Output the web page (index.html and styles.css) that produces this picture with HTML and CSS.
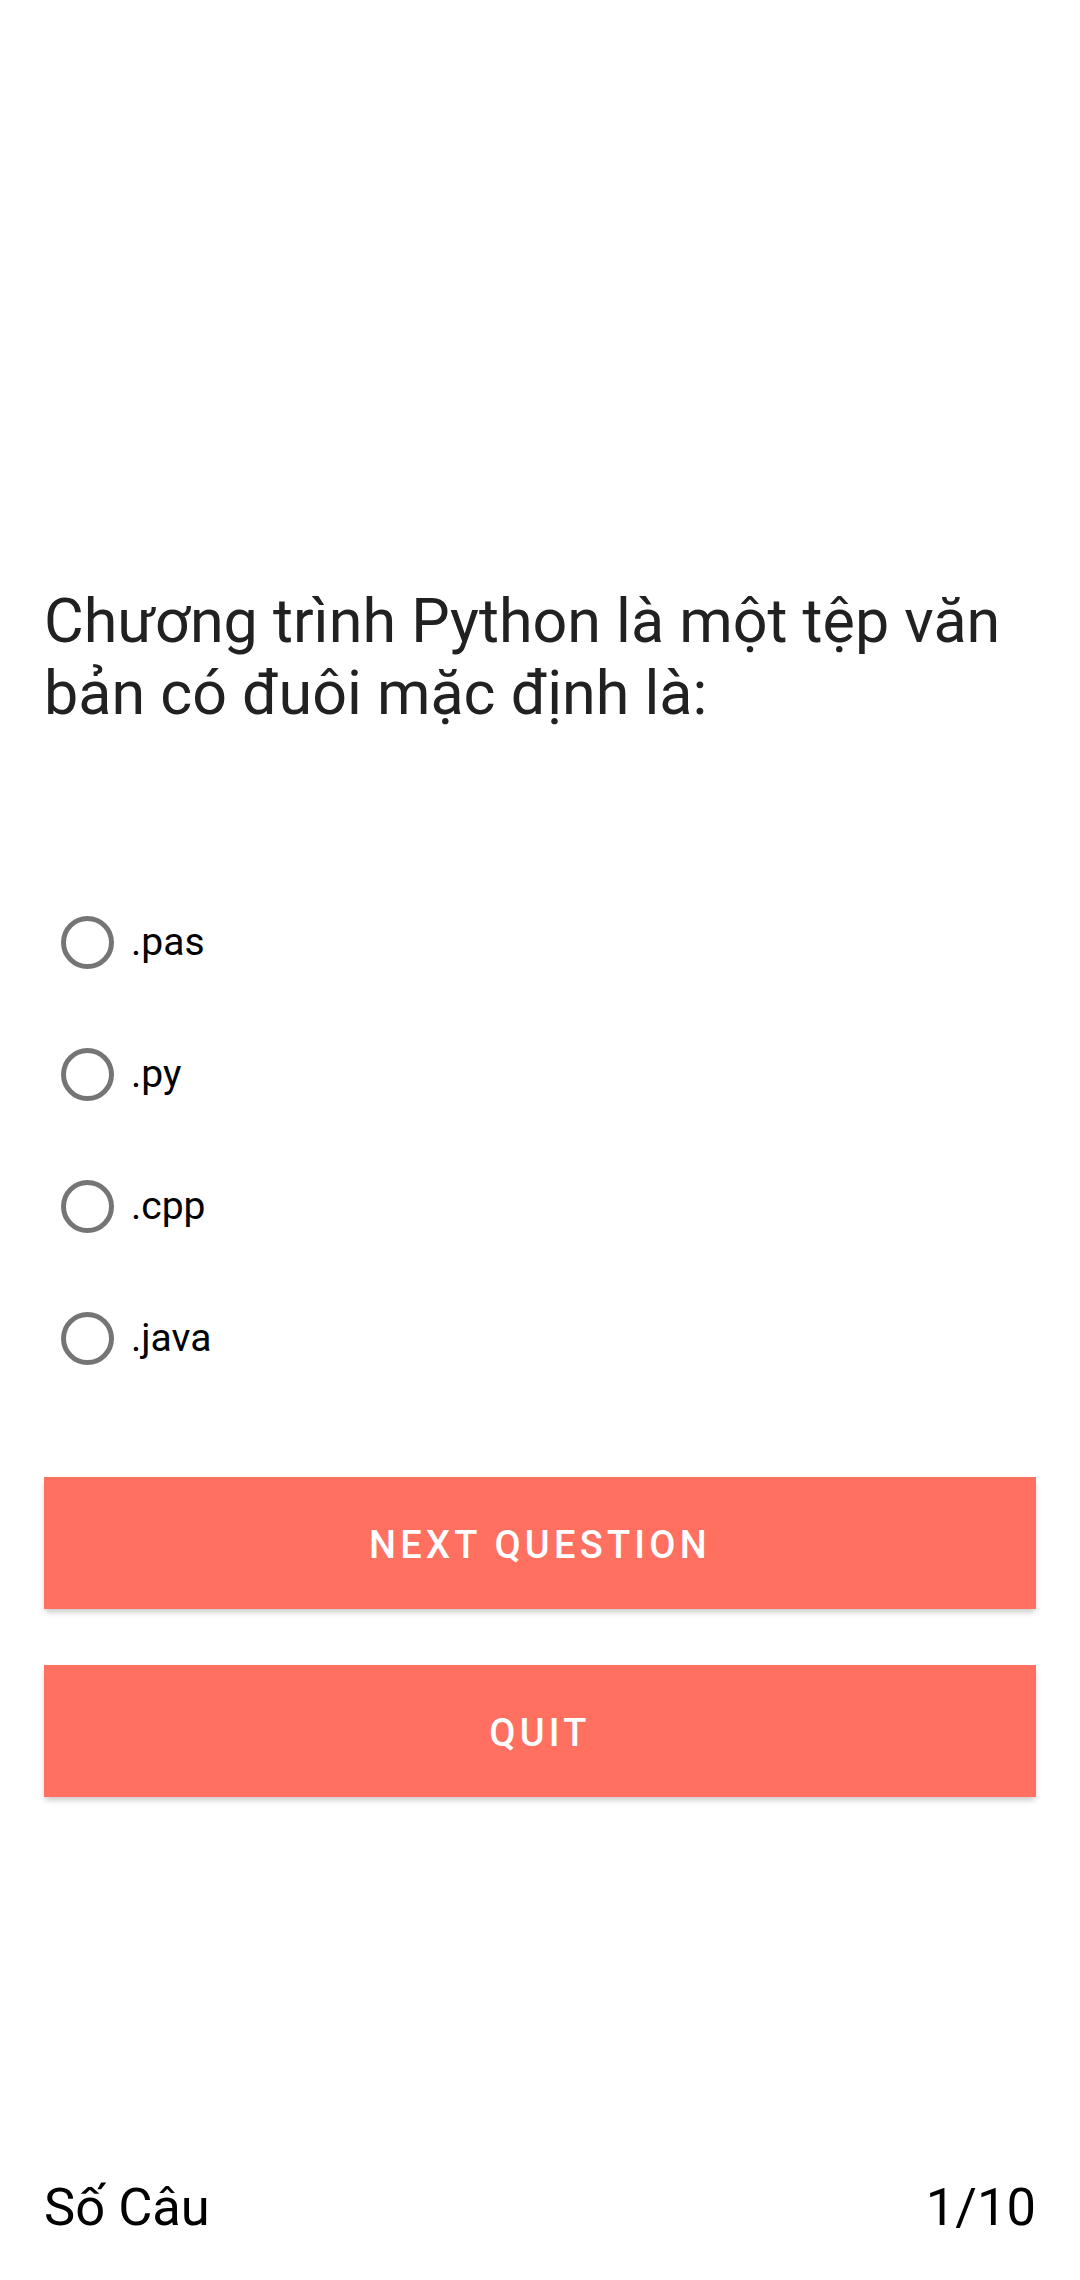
FILE: index.html
```html
<!DOCTYPE html>
<html lang="vi">
<head>
<meta charset="utf-8">
<title>Quiz</title>
<link rel="stylesheet" href="styles.css">
</head>
<body>
<main class="screen">
  <h1 class="question">Chương trình Python là một tệp văn bản có đuôi mặc định là:</h1>
  <div class="options">
    <label class="option"><span class="radio"></span><span class="option-text">.pas</span></label>
    <label class="option"><span class="radio"></span><span class="option-text">.py</span></label>
    <label class="option"><span class="radio"></span><span class="option-text">.cpp</span></label>
    <label class="option"><span class="radio"></span><span class="option-text">.java</span></label>
  </div>
  <button class="btn btn-next">Next Question</button>
  <button class="btn btn-quit">Quit</button>
  <footer class="footer">
    <span class="footer-label">Số Câu</span>
    <span class="footer-count">1/10</span>
  </footer>
</main>
</body>
</html>
```
FILE: styles.css
```css
html, body {
  margin: 0;
  padding: 0;
  background: #ffffff;
}

body {
  width: 1080px;
  height: 2280px;
  overflow: hidden;
  font-family: Roboto, "Noto Sans", "Liberation Sans", sans-serif;
}

.screen {
  display: flex;
  flex-direction: column;
  padding: 585px 44px 0 44px;
}

.question {
  margin: 0;
  font-size: 61px;
  font-weight: 400;
  line-height: 72px;
  color: #212121;
}

.options {
  display: flex;
  flex-direction: column;
  margin-top: 147px;
}

.option {
  display: flex;
  align-items: center;
  height: 132px;
  padding-left: 17px;
}

.radio {
  box-sizing: border-box;
  width: 53px;
  height: 53px;
  border: 5px solid #757575;
  border-radius: 50%;
  flex: none;
}

.option-text {
  margin-left: 17px;
  font-size: 39px;
  color: #000000;
}

.btn {
  display: block;
  width: 992px;
  height: 132px;
  border: none;
  padding: 4px 0 0 0;
  background: #ff7060;
  color: #ffffff;
  font-family: Roboto, "Noto Sans", "Liberation Sans", sans-serif;
  font-size: 38px;
  font-weight: 500;
  letter-spacing: 0.112em;
  text-transform: uppercase;
  box-shadow: 0 4px 6px -1px rgba(0, 0, 0, 0.22);
}

.btn-next {
  margin-top: 73px;
}

.btn-quit {
  margin-top: 56px;
}

.footer {
  display: flex;
  justify-content: space-between;
  align-items: baseline;
  margin-top: 380px;
  font-size: 52.5px;
  line-height: 60px;
  color: #000000;
}
```
